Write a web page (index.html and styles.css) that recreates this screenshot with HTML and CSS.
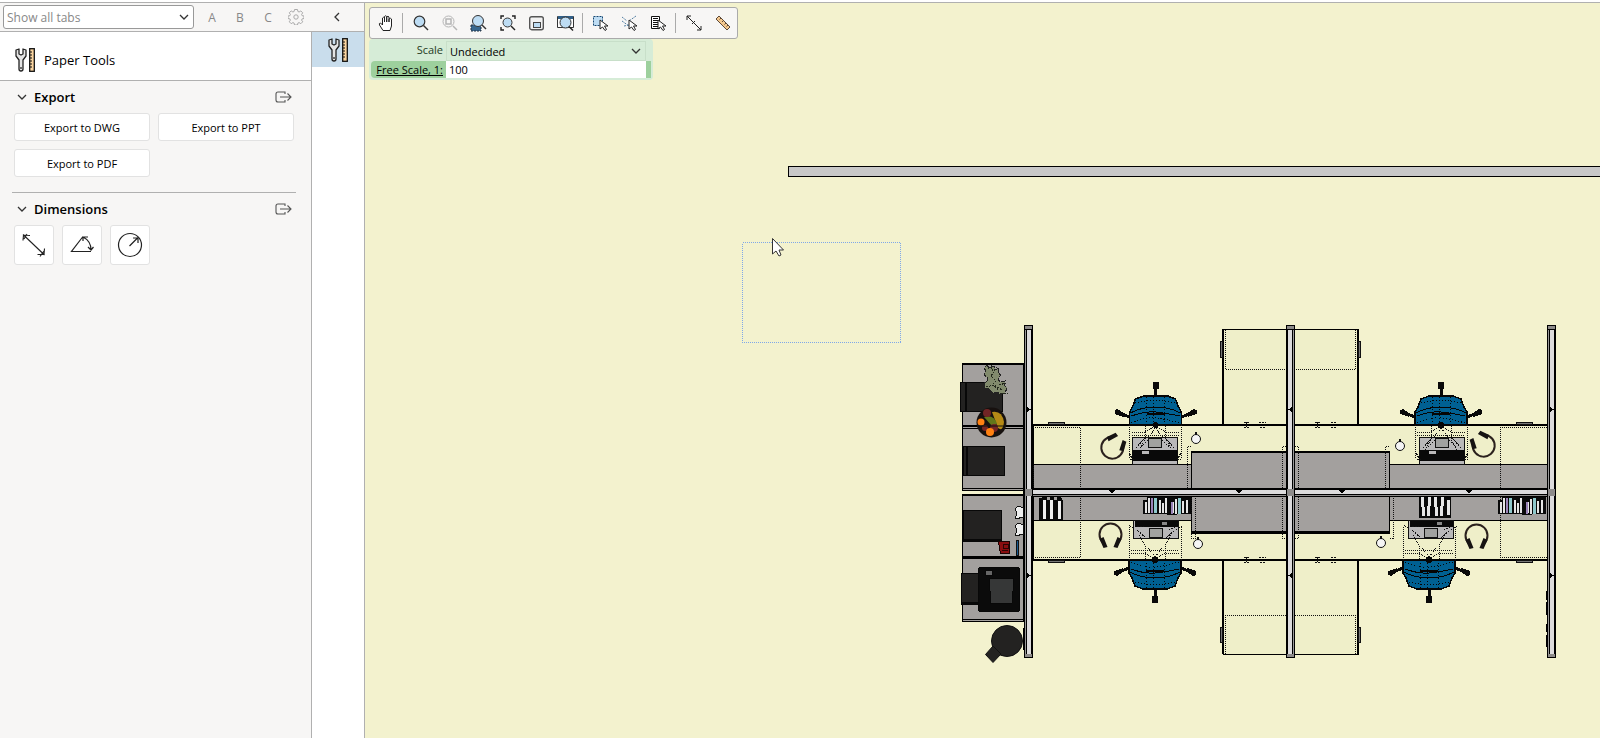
FILE: index.html
```html
<!DOCTYPE html>
<html lang="en">
<head>
    <meta charset="UTF-8">
    <meta name="viewport" content="width=device-width, initial-scale=1.0">
    <title>Paper Tools</title>
    <link rel="stylesheet" href="styles.css">
</head>
<body>
    <!-- Shared icons -->
    <svg class="defs" width="0" height="0" aria-hidden="true">
        <symbol id="i-down" viewBox="0 0 10 6"><path d="M1 1l4 4 4-4" fill="none" stroke="#333" stroke-width="1.3"/></symbol>
        <symbol id="i-tools" viewBox="0 0 20 24">
            <path d="M1 2L1 8L4 12L4 21Q4 23 6 23Q8 23 8 21L8 12L11 8L11 2L8 1L8 6L6 7L4 6L4 1Z" fill="#e4e4e4" stroke="#222" stroke-width="1.3" stroke-linejoin="round"/>
            <circle cx="6" cy="20" r="1" fill="#444"/>
            <rect x="14.7" y=".7" width="4.6" height="22.6" fill="#fbd5a0" stroke="#111" stroke-width="1.3"/>
            <path d="M15 4h2M15 7h2M15 10h2M15 13h2M15 16h2M15 19h2" stroke="#111"/>
        </symbol>
        <symbol id="i-popout" viewBox="0 0 17 12">
            <path d="M10 3V1H3Q1 1 1 3V9Q1 11 3 11H10V9M5 6H16M12.500 2.500L16 6L12.500 9.500" fill="none" stroke="#555" stroke-width="1.1"/>
        </symbol>
        <symbol id="i-dim" viewBox="0 0 24 24">
            <path d="M1 1.500L22.500 22M1 7.500L1.500 2L8 2.500M5 1L2 6M15.500 21.500L22 21.500L22.500 15.500M18 23.500L22 18" fill="none" stroke="#222" stroke-width="1.1"/>
        </symbol>
        <symbol id="i-lens" viewBox="0 0 16 16">
            <path d="M10.500 10.500L15 15" stroke="#333" stroke-width="1.4"/>
            <circle cx="6.500" cy="6.500" r="5.300" fill="#bddcf3" stroke="#333" stroke-width="1.200"/>
        </symbol>
        <symbol id="i-pointer" viewBox="0 0 10 12">
            <path d="M1 1V10L3.500 8L6 11.500L7.500 10.500L5.500 7H9Z" fill="#fff" stroke="#222"/>
        </symbol>
    </svg>

    <div class="app">
        <aside class="side">
            <header class="side-top">
                <div class="select-wrap tabs-select">
                    <select aria-label="Tabs"><option>Show all tabs</option></select>
                    <svg width="10" height="6"><use href="#i-down"/></svg>
                </div>
                <button class="flat">A</button>
                <button class="flat">B</button>
                <button class="flat">C</button>
                <button class="flat" aria-label="Settings">
                    <svg width="16" height="16" viewBox="0 0 16 16" fill="none" stroke="#aaa" stroke-linejoin="round">
                        <path d="M6.500 .5h3l.4 2 1.200.5 1.700-1.100 1.900 1.900-1.100 1.700.5 1.200 1.900.3v2.500l-1.900.4-.5 1.200 1.100 1.700-1.900 1.900-1.700-1.100-1.200.5-.4 1.900h-3l-.4-1.900-1.200-.5-1.700 1.100-1.900-1.900 1.100-1.700-.5-1.200-1.900-.4v-2.500l1.900-.3.5-1.200-1.100-1.700 1.900-1.900 1.700 1.100 1.200-.5z"/>
                        <circle cx="8" cy="8" r="2.200"/>
                    </svg>
                </button>
                <button class="flat collapse" aria-label="Collapse">
                    <svg width="6" height="10" viewBox="0 0 6 10"><path d="M5 1L1 5l4 4" fill="none" stroke="#333" stroke-width="1.300"/></svg>
                </button>
            </header>
            <div class="side-body">
                <main class="panel">
                    <h1 class="panel-title"><svg width="20" height="24"><use href="#i-tools"/></svg>Paper Tools</h1>
                    <section class="section">
                        <h2><svg width="10" height="6"><use href="#i-down"/></svg>Export
                            <button class="popout" aria-label="Pop out Export"><svg width="17" height="12"><use href="#i-popout"/></svg></button></h2>
                        <div class="export-grid">
                            <button class="card">Export to DWG</button>
                            <button class="card">Export to PPT</button>
                            <button class="card">Export to PDF</button>
                        </div>
                    </section>
                    <section class="section">
                        <h2><svg width="10" height="6"><use href="#i-down"/></svg>Dimensions
                            <button class="popout" aria-label="Pop out Dimensions"><svg width="17" height="12"><use href="#i-popout"/></svg></button></h2>
                        <div class="icon-row">
                            <button class="card" aria-label="Linear"><svg width="24" height="24"><use href="#i-dim"/></svg></button>
                            <button class="card" aria-label="Angle">
                                <svg width="24" height="24" viewBox="0 0 24 24" fill="none" stroke="#222" stroke-width="1.200"><path d="M13 3.500L1.500 18.500H21M13 4Q21 8 21 17M13 8V4H18M18 14L21 17L23.500 14"/></svg>
                            </button>
                            <button class="card" aria-label="Radius">
                                <svg width="26" height="26" viewBox="0 0 26 26" fill="none" stroke="#222" stroke-width="1.200"><circle cx="13" cy="13" r="11.500"/><path d="M12.500 14L21 5.500M16 6H21V11"/></svg>
                            </button>
                        </div>
                    </section>
                </main>
                <nav class="tabs">
                    <button class="tab" aria-label="Paper Tools"><svg width="20" height="24"><use href="#i-tools"/></svg></button>
                </nav>
            </div>
        </aside>

        <div class="canvas">
            <!-- Floor plan -->
            <svg class="plan" aria-hidden="true" shape-rendering="crispEdges">
                <defs>
                    <g id="post">
                        <rect width="9" height="333" fill="#000"/>
                        <rect x="1" y="5" width="1" height="324" fill="#999"/>
                        <rect x="3" y="5" width="4" height="324" fill="#dcdbdc"/>
                        <path d="M1 1h7v3h-7zM1 329h7v3h-7zM1 164h7v7h-7z" fill="#8d8b8a"/>
                        <path d="M3 82l4 2.500-4 2.500zM3 248l4 2.500-4 2.500z" fill="#000"/>
                    </g>
                    <g id="chair">
                        <path d="M0-30V-39M-26-8L-36-12M26-8L36-12" stroke="#090909" stroke-width="3"/>
                        <path d="M-3-43h6v7h-6zM-41-15l3-1 6 4v4l-9-3zM41-15l-3-1-6 4v4l9-3z" fill="#090909"/>
                        <path d="M-26 0V-13L-23-18L-20-26L-12-29H12L20-26L23-18L26-13V0Z" fill="#006092" stroke="#050505" stroke-width="1.500"/>
                        <path d="M-13-29H13M-9-11H9" stroke="#050505" stroke-width="2"/>
                        <path d="M-25-12Q-14-18 0-18T25-12M-24-9Q-10-14 0-13T24-9" fill="none" stroke="#050505"/>
                        <path d="M-20-22Q0-27 20-22M-24-2Q-10-8 0-7T24-2M-9 0V-29M9 0V-29M-2 0V-29" fill="none" stroke="#050505" stroke-dasharray="1 2"/>
                        <circle r="3" fill="#050505"/>
                        <path d="M-26 0V34M26 0V34M-24 7H-10L0 1L10 7H24M-24 10H24M-10 1V14L-16 25M10 1V14L16 25M-7 12L0 3L7 12" fill="none" stroke="#111" stroke-dasharray="1 1"/>
                    </g>
                    <g id="laptop">
                        <path d="M0 0h45v27h-45z" fill="#b9b8b9" stroke="#111"/>
                        <path d="M-1 12h46v11h-46z" fill="#090909"/>
                        <path d="M16 .5h13v9h-13z" fill="#a1a2a0" stroke="#111"/>
                        <path d="M9 13h7v3h-7z" fill="#b9b8b9"/>
                        <path d="M3 11L12 1M42 11L33 1M8 10L15 3M37 10L30 3M-3 16L0 22M48 16L45 22M-3 22h4M44 22h4" stroke="#111" stroke-dasharray="2 1"/>
                    </g>
                    <g id="laptop-low">
                        <path d="M0 0h45v18h-45z" fill="#b9b8b9" stroke="#111"/>
                        <path d="M1 0h43v6h-43z" fill="#090909"/>
                        <path d="M16 8h13v9h-13z" fill="#a1a2a0" stroke="#111"/>
                        <path d="M28 1h5v3h-5z" fill="#888"/>
                        <path d="M4 10L12 17M41 10L33 17M-4 5L2 9M49 5L43 9M3 6L10 6M42 7L36 9" stroke="#111" stroke-dasharray="2 1"/>
                    </g>
                    <g id="headset" shape-rendering="auto">
                        <path d="M-8 8A11 11 0 1 1 8 8" fill="none" stroke="#2b211d" stroke-width="2"/>
                        <path d="M-11 5l4-2 4 10-4 1zM11 5l-4-2-4 10 4 1z" fill="#161312"/>
                    </g>
                    <g id="mouse" shape-rendering="auto">
                        <circle r="4.500" fill="#f5f5f5" stroke="#111"/>
                        <path d="M-1-7h2v3h-2z" fill="#111"/>
                    </g>
                    <g id="books">
                        <path d="M0 3h4V0h44v17h-14v1h-10v-1h-24z" fill="#0a0a0a"/>
                        <path d="M3 5v11M6 1v15M17 3v13M20 6v10M23 1v15M30 5v11M33 2v15M40 4v12M44 3v13" stroke="#e6e6e6" stroke-width="1.500"/>
                        <path d="M12.500 1v15M36.500 1v16" stroke="#8fc9cc" stroke-width="3"/>
                        <path d="M9 1v15M28.500 5v12" stroke="#9b83b8" stroke-width="2"/>
                    </g>
                </defs>

                <g transform="translate(-365 -3)">
                    <!-- wall and selection -->
                    <path d="M2600 166.500H788.500V176.500H2600" fill="#c8c8c8" stroke="#000"/>
                    <rect x="742.500" y="242.500" width="158" height="100" fill="none" stroke="#7fa8e8" stroke-dasharray="1 1"/>

                    <!-- meeting desks -->
                    <g fill="#efefc9" stroke="#000">
                        <path d="M1223 424V329.500H1358V424M1223 561V654.500H1358V561"/>
                        <path d="M1033 425H1547V560H1033Z"/>
                    </g>
                    <path d="M1223 329V425M1358 329V425M1223 561V654M1358 561V654M1033 425H1547M1033 560H1547" stroke="#000" stroke-width="2"/>
                    <path d="M1225.500 330V369.500H1355.500V330M1225.500 654V615.500H1355.500V654" fill="none" stroke="#111" stroke-dasharray="1 1"/>
                    <path d="M1220.500 341.500h2v16h-2zM1220.500 627.500h2v15h-2zM1358.500 341.500h2v16h-2zM1358.500 627.500h2v15h-2zM1048.500 422.500h16v2h-16zM1048.500 560.500h16v2h-16zM1516.500 422.500h16v2h-16zM1516.500 560.500h16v2h-16z" fill="#777" stroke="#111"/>

                    <!-- shelves -->
                    <g fill="#a3a09e" stroke="#000">
                        <path d="M1033 464.500H1547V520.500H1033Z"/>
                        <path d="M1191.500 452H1389.500V533H1191.500Z"/>
                    </g>
                    <path d="M1191 452H1390M1191 532H1390" stroke="#000" stroke-width="2"/>
                    <path d="M1033 427.500H1080.500V557.500H1033M1547 427.500H1500.500V557.500H1547M1033.500 466V488M1187.500 488V446.500H1191M1282.500 488V446.500H1286M1295 446.500H1298.500V488M1389 446.500H1385.500V488M1191.500 496V538.500H1195.500V496M1282.500 496V538.500H1286M1295 538.500H1298.500V496M1389.500 538.500H1393.500V496" fill="none" stroke="#111" stroke-dasharray="1 1"/>
                    <path d="M1244 422.500h6M1244 427.500h6M1246.500 422v6M1259 422.500h7M1260 427.500h6M1315 422.500h6M1315 427.500h6M1317.500 422v6M1331 422.500h6M1331 427.500h6M1244 557.500h6M1244 562.500h6M1246.500 557v6M1259 557.500h7M1260 562.500h6M1315 557.500h6M1315 562.500h6M1317.500 557v6M1331 557.500h6M1331 562.500h6" stroke="#111" stroke-dasharray="2 1"/>

                    <!-- storage on the left -->
                    <path d="M962.500 363.500H1024V490.500H962.500ZM962.500 494.500H1024V621.500H962.500Z" fill="#a3a09e" stroke="#000"/>
                    <path d="M962 364H1024M962 426H1024M962 495H1024M962 557H1024M1024 363V621" stroke="#000" stroke-width="2"/>
                    <path d="M962 428.500H1024M962 488.500H1024M962 558.500H1024M962 619.500H1024" stroke="#000"/>
                    <g fill="#232221" stroke="#080808">
                        <path d="M960.500 382.500H1002.500V411.500H960.500ZM963.500 446.500H1004.500V475.500H963.500ZM963.500 510.500H1001.500V541.500H963.500ZM961.500 573.500H979.500V604.500H961.500Z"/>
                        <path d="M965.500 383V411M966.500 447V475M963 539.500H1002M962 602.500H979" stroke-width="2"/>
                        <rect x="978.500" y="567.500" width="41" height="44" rx="2" fill="#0b0b0b"/>
                        <path d="M989.500 578.500H1014L1012 603H990.500Z" fill="#363737"/>
                        <path d="M985 570h7v5h-7z" fill="#666"/>
                    </g>
                    <path d="M987 365l2 3 5-2 1 4 4-2-1 5 3 2-3 4 2 3 5-1-1 4 3 3-2 5-5 1-3-2-4 1-4-4-4-1-1-5 3-2 0-4-3-2 2-4-2-3z" fill="#818a6c" stroke="#222" stroke-dasharray="5 1"/>
                    <path d="M985 366l4 3M992 365l-1 4M997 367l-3 4M990 367l4 5-3 4 5 5-4 4 7 5M986 387l8-2 8 5M999 385l7-2M1001 394l7-1" fill="none" stroke="#23281b" stroke-dasharray="2 1"/>
                    <g shape-rendering="auto">
                        <circle cx="991.500" cy="422.500" r="15" fill="#17110f"/>
                        <path d="M992 412q10-2 12 10-1 10-6 6z" fill="#b58a16"/>
                        <path d="M984 417q10-3 13 7l-5 2z" fill="#63771b"/>
                        <circle cx="987" cy="413" r="4" fill="#722525"/>
                        <circle cx="994" cy="428" r="4" fill="#722525"/>
                        <circle cx="985" cy="428" r="3" fill="#722525"/>
                        <circle cx="981" cy="422" r="3.500" fill="#ff8112"/>
                        <circle cx="990" cy="432" r="4" fill="#ff8112"/>
                        <path d="M977 426H1006" stroke="#111"/>
                        <circle cx="1007" cy="641" r="15.500" fill="#232221" stroke="#111"/>
                        <path d="M985.500 654.500L993 646L1001 654L993 662.500Z" fill="#232221" stroke="#111"/>
                    </g>
                    <path d="M1015.500 508.500l2-2 6 1v10l-8 1 1-5zM1015.500 525.500l2-2 6 1v10l-8 1 1-5z" fill="#eee" stroke="#111"/>
                    <path d="M998.500 541.500h11v12h-9z" fill="#8a0d0f" stroke="#1b0303"/>
                    <path d="M1003 544h5v4h-5zM1002 550h6" fill="none" stroke="#2a0404"/>
                    <rect x="1016.500" y="540.500" width="2" height="15" fill="#175a91" stroke="#111"/>

                    <!-- books -->
                    <path d="M1039 498h3v-1h5v3h3v-3h4v3h3v-3h4l2 4v19h-24z" fill="#090909"/>
                    <path d="M1044 500v19M1051.500 500v19M1059.500 501v18" stroke="#eee" stroke-width="3"/>
                    <use href="#books" x="1143" y="497"/>
                    <path d="M1419 497h32v21h-32z" fill="#090909"/>
                    <path d="M1422.500 497l1 19M1429.500 497l-1 19M1435.500 497l1 19M1442.500 497l-1 19M1448.500 500v15" stroke="#e6e6e6" stroke-width="3"/>
                    <use href="#books" x="1498" y="497"/>

                    <!-- work places -->
                    <use href="#laptop" x="1132.500" y="437.500"/>
                    <use href="#laptop" x="1419.500" y="437.500"/>
                    <use href="#laptop-low" x="1133.500" y="520.500"/>
                    <use href="#laptop-low" x="1408.500" y="520.500"/>
                    <use href="#chair" transform="translate(1155.500 425)"/>
                    <use href="#chair" transform="translate(1441 425)"/>
                    <use href="#chair" transform="translate(1155 560) scale(1 -1)"/>
                    <use href="#chair" transform="translate(1429 560) scale(1 -1)"/>
                    <use href="#headset" transform="translate(1112 448) rotate(-140)"/>
                    <use href="#headset" transform="translate(1484 446) rotate(140)"/>
                    <use href="#headset" x="1110.500" y="534"/>
                    <use href="#headset" x="1476.500" y="535"/>
                    <use href="#mouse" x="1196" y="439"/>
                    <use href="#mouse" x="1198" y="544"/>
                    <use href="#mouse" x="1400" y="446"/>
                    <use href="#mouse" x="1381" y="543"/>

                    <!-- frame -->
                    <path d="M1033 488h514v9h-514z" fill="#000"/>
                    <path d="M1033 490h514v4h-514z" fill="#dcdbdc"/>
                    <path d="M1033 495h514v1h-514z" fill="#8d8b8a"/>
                    <path d="M1109 490h6l-3 4zM1236 490h6l-3 4zM1339 490h6l-3 4zM1466 490h6l-3 4z" fill="#000"/>
                    <use href="#post" x="1024" y="325"/>
                    <use href="#post" transform="translate(1295 325) scale(-1 1)"/>
                    <use href="#post" x="1547" y="325"/>
                    <path d="M1547 591v9M1547 602v13M1547 624v8M1547 635v12M1024 628v22" stroke="#000" stroke-width="2"/>

                    <path d="M772.500 238.500V254L776 251L779 256L781 255L779 250H783.500Z" fill="#fff" stroke="#333" shape-rendering="auto"/>
                </g>
            </svg>

            <div class="float">
                <div class="toolbar" role="toolbar">
                    <button aria-label="Pan"><svg width="16" height="18" viewBox="0 0 16 18"><path d="M5 16.500L1.500 11Q.8 9 2.500 9L4.500 11V4Q5.500 2.500 6.500 4V8V2.500Q7.500 1 8.700 2.500V8V3Q10 1.500 11 3V8V5Q12.500 3.500 13.500 5V12L12 16.500Z" fill="#fff" stroke="#222"/></svg></button>
                    <span class="sep"></span>
                    <button aria-label="Zoom"><svg width="16" height="16"><use href="#i-lens"/></svg></button>
                    <button aria-label="Zoom selection" disabled><svg width="16" height="16" viewBox="0 0 16 16" fill="none" stroke="#b5b5b5"><circle cx="6.500" cy="6.500" r="5.500"/><path d="M4 4h5v5h-5zM11 11l4 4" stroke-width="1.500"/></svg></button>
                    <button aria-label="Zoom region"><svg width="17" height="18" viewBox="0 0 17 18"><path d="M1 11h10v6h-10z" fill="#38678e" stroke="#234" stroke-dasharray="2 1"/><circle cx="8" cy="7" r="5.500" fill="#bddcf3" stroke="#333"/><path d="M12 11l4 4" stroke="#333" stroke-width="1.400"/></svg></button>
                    <button aria-label="Zoom extents"><svg width="16" height="16" viewBox="0 0 16 16"><path d="M1 4V1H4M12 1h3v3M1 12v3h3" fill="none" stroke="#222" stroke-width="1.400"/><circle cx="7.500" cy="7.500" r="4.500" fill="#bddcf3" stroke="#333"/><path d="M11 11l4 4" stroke="#222" stroke-width="1.400"/></svg></button>
                    <button aria-label="Overview"><svg width="15" height="16" viewBox="0 0 15 16"><rect x=".7" y="1.700" width="13.600" height="13" rx="2" fill="#f2f2f2" stroke="#555" stroke-width="1.400"/><rect x="4.500" y="7.500" width="7" height="5" fill="#bddcf3" stroke="#444"/></svg></button>
                    <button aria-label="Zoom window"><svg width="17" height="16" viewBox="0 0 17 16"><path d="M.5 1.500h16v11h-16z" fill="#fff" stroke="#333"/><path d="M1 1h15v3h-15z" fill="#305f88"/><circle cx="8.500" cy="7.500" r="5.500" fill="#bddcf3" stroke="#333"/><path d="M12 11.500l4 4" stroke="#222" stroke-width="1.400"/></svg></button>
                    <span class="sep"></span>
                    <button aria-label="Select area"><svg width="17" height="16" viewBox="0 0 17 16"><rect x="1.500" y="1.500" width="9" height="9" fill="#bddcf3" stroke="#174873" stroke-dasharray="2 1"/><use href="#i-pointer" x="7" y="4" width="10" height="12"/></svg></button>
                    <button aria-label="Select crossing"><svg width="17" height="16" viewBox="0 0 17 16"><path d="M1 2l5 4M1 6l7 5M15 1L8 6M3 11l5-1" stroke="#5681a5" stroke-dasharray="2 1"/><use href="#i-pointer" x="7" y="4" width="10" height="12"/></svg></button>
                    <button aria-label="Select by list"><svg width="17" height="16" viewBox="0 0 17 16"><path d="M1.500 1.500h8v12h-8z" fill="#fff" stroke="#111"/><path d="M3 3.500h5M3 5.500h5M3 7.500h5M3 9.500h5M3 11.500h5" stroke="#111" shape-rendering="crispEdges"/><use href="#i-pointer" x="7" y="4" width="10" height="12"/></svg></button>
                    <span class="sep"></span>
                    <button aria-label="Dimension"><svg width="16" height="16" viewBox="0 0 16 16"><path d="M1 1l14 14M1 5V1h4M15 11v4h-4M6 9l3-3" fill="none" stroke="#222"/></svg></button>
                    <button aria-label="Measure"><svg width="16" height="16" viewBox="0 0 16 16"><path d="M4 1L15 12L12 15L1 4Z" fill="#f5c88e" stroke="#5d4937"/><path d="M6 3L4.500 4.500M8.500 5.500L7 7M11 8L9.500 9.500M13 10L11.500 11.500" stroke="#5d4937"/></svg></button>
                </div>

                <form class="scale">
                    <label for="scale">Scale</label>
                    <div class="select-wrap">
                        <select id="scale"><option>Undecided</option></select>
                        <svg width="10" height="6"><use href="#i-down"/></svg>
                    </div>
                    <label for="free" class="active">Free Scale, 1:</label>
                    <input id="free" type="text" value="100">
                </form>
            </div>
        </div>
    </div>
</body>
</html>
```
FILE: styles.css
```css
* {
    box-sizing: border-box;
    margin: 0;
    padding: 0;
}

body {
    font-family: "Open Sans", "Noto Sans", sans-serif;
    font-size: 12px;
    color: #000;
    background: #fff;
}

button, select, input {
    font: inherit;
    color: inherit;
    border: none;
    background: none;
}

svg {
    display: block;
    flex: none;
}

.defs {
    position: absolute;
}

.app {
    display: grid;
    grid-template-columns: 365px 1fr;
    min-height: 100vh;
    border-top: 2px solid #fff;
}

/* Left side */
.side {
    display: flex;
    flex-direction: column;
    border-top: 1px solid #b0b0b0;
    border-right: 1px solid #b0b0b0;
    background: #f7f6f5;
}

.side-top {
    display: flex;
    align-items: center;
    height: 29px;
    padding-left: 3px;
    border-bottom: 1px solid #b0b0b0;
    color: #888;
}

.select-wrap {
    position: relative;
}

.select-wrap select {
    appearance: none;
    display: block;
    width: 100%;
    height: 100%;
    padding: 0 3px;
}

.select-wrap svg {
    position: absolute;
    right: 4px;
    top: calc(50% - 3px);
    pointer-events: none;
}

.tabs-select {
    width: 191px;
    height: 24px;
    margin-right: 4px;
    border: 1px solid #999;
    border-radius: 3px;
    background: #fff;
}

.flat {
    display: grid;
    place-items: center;
    width: 28px;
    height: 28px;
}

.collapse {
    flex: 1;
}

.side-body {
    display: flex;
    flex: 1;
}

.panel {
    flex: 1;
    border-right: 1px solid #b0b0b0;
}

.panel-title {
    display: flex;
    align-items: center;
    gap: 9px;
    height: 49px;
    padding: 7px 0 0 15px;
    border-bottom: 1px solid #b0b0b0;
    background: #fff;
    font-size: 13px;
    font-weight: normal;
}

.section {
    margin: 0 15px 0 12px;
    padding: 0 2px 15px;
}

.section + .section {
    border-top: 1px solid #b0b0b0;
}

.section h2 {
    display: flex;
    align-items: center;
    gap: 7px;
    height: 32px;
    padding-left: 3px;
    font-size: 13px;
    font-weight: 600;
}

.popout {
    margin-left: auto;
    margin-right: 2px;
}

.card {
    display: grid;
    place-items: center;
    border: 1px solid #e2e2e2;
    border-radius: 3px;
    background: #fff;
    font-size: 11px;
}

.export-grid {
    display: grid;
    grid-template-columns: 1fr 1fr;
    grid-auto-rows: 28px;
    gap: 8px;
}

.icon-row {
    display: flex;
    gap: 8px;
}

.icon-row .card {
    width: 40px;
    height: 40px;
}

.tabs {
    width: 52px;
    background: #fff;
}

.tab {
    display: grid;
    place-items: center;
    width: 100%;
    height: 35px;
    background: #c9ddec;
}

/* Drawing area */
.canvas {
    position: relative;
    overflow: hidden;
    border-top: 1px solid #b0b0b0;
    background: #f3f2ce;
}

.plan {
    position: absolute;
    inset: 0;
    width: 100%;
    height: 100%;
}

.float {
    position: relative;
    display: flex;
    flex-direction: column;
    align-items: flex-start;
    padding: 4px;
}

.toolbar {
    display: flex;
    align-items: center;
    height: 32px;
    padding-left: 1px;
    border: 1px solid #aaa;
    border-radius: 3px;
    background: #f7f6f5;
}

.toolbar button {
    display: grid;
    place-items: center;
    width: 29px;
    height: 30px;
}

.sep {
    width: 1px;
    height: 20px;
    margin: 0 3px 0 2px;
    background: #aaa;
}

.scale {
    display: grid;
    grid-template-columns: 75px 200px;
    grid-template-rows: 20px 17px;
    padding: 2px 7px 2px 2px;
    border-radius: 4px;
    background: linear-gradient(#9dd09d, #9dd09d) right 2px bottom 2px / 10px 17px no-repeat #d6ecd7;
    font-size: 11px;
}

.scale label {
    padding-right: 3px;
    line-height: 17px;
    text-align: right;
    white-space: nowrap;
    color: #243b24;
}

.scale .active {
    border-radius: 4px 0 0 4px;
    background: #9dd09d;
    color: #000;
    text-decoration: underline;
}

.scale .select-wrap {
    border: 1px solid #c8dfc9;
    background: #d6ecd7;
}

.scale input {
    padding: 0 3px;
    background: #fff;
}
```
